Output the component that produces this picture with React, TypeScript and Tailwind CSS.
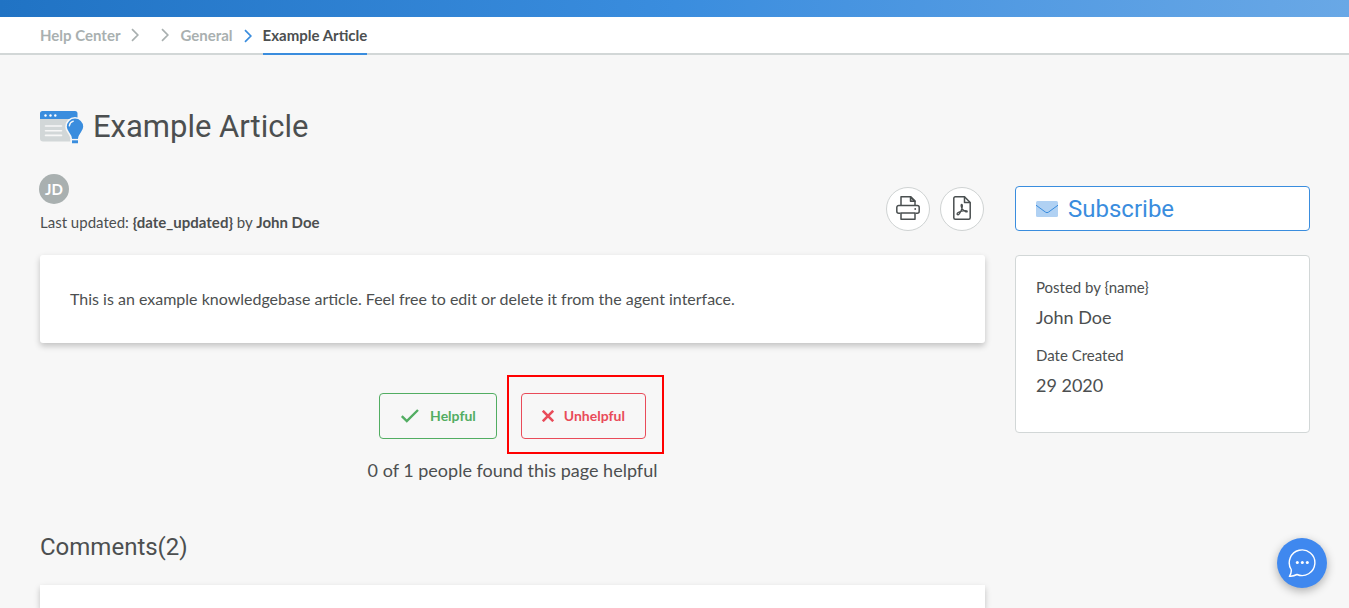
function Chevron({ active = false }: { active?: boolean }) {
  return (
    <svg viewBox="0 0 8 14" className={active ? "h-3.5 w-2 text-[#3a8dde]" : "h-3.5 w-2 text-[#a9b0b0]"} fill="none" stroke="currentColor" strokeWidth="1.7" aria-hidden="true">
      <path d="M1 1.2 6.8 7 1 12.8" />
    </svg>
  );
}

function ArticleIcon() {
  return (
    <svg viewBox="0 0 44 34" className="h-[34px] w-11 shrink-0" aria-hidden="true">
      <path d="M0 9h37v19.500a3 3 0 0 1-3 3H3a3 3 0 0 1-3-3z" fill="#d2d7d8" />
      <path d="M2.500 1h32.500a2.500 2.500 0 0 1 2.500 2.500V9H0V3.500A2.500 2.500 0 0 1 2.500 1z" fill="#3a8dde" />
      <g fill="#fff">
        <circle cx="5.500" cy="5.500" r="1.200" />
        <circle cx="10.500" cy="5.500" r="1.200" />
        <circle cx="15.300" cy="5.500" r="1.200" />
      </g>
      <path d="M5.500 16h16M5.500 20.700h16M5.500 25.400h16" stroke="#f7f7f7" strokeWidth="1.600" strokeLinecap="round" />
      <path d="M35 7.800a9 9 0 0 0-9 9c0 5.500 5.200 6.700 5.200 12V34h7.600v-5.200c0-5.300 5.200-6.500 5.200-12a9 9 0 0 0-9-9z" fill="#3a8dde" stroke="#f7f7f7" strokeWidth="1.600" />
      <path d="M30.500 29.600h9" stroke="#f7f7f7" strokeWidth="1.400" />
      <path d="M29.300 15.800a5.700 5.700 0 0 1 4-4.600" fill="none" stroke="#f7f7f7" strokeWidth="1.300" strokeLinecap="round" />
    </svg>
  );
}

function PrintIcon() {
  return (
    <svg viewBox="0 0 24 24" className="size-6" fill="none" stroke="#4a4f50" strokeWidth="1.500" strokeLinejoin="round" aria-hidden="true">
      <path d="M5 9.500V.8h9.700l4.300 4.300v4.400" />
      <path d="M14.500.8v4.500H19z" fill="#4a4f50" fillOpacity=".35" />
      <path d="M4.500 17.200H2.800a2 2 0 0 1-2-2v-3.700a2 2 0 0 1 2-2h18.400a2 2 0 0 1 2 2v3.700a2 2 0 0 1-2 2h-1.700" />
      <path d="M5 17h14v6.200H5z" />
      <circle cx="19.200" cy="13" r=".9" fill="#4a4f50" stroke="none" />
    </svg>
  );
}

function PdfIcon() {
  return (
    <svg viewBox="0 0 18 24" className="h-6 w-[18px]" fill="none" stroke="#4a4f50" strokeWidth="1.500" strokeLinejoin="round" aria-hidden="true">
      <path d="M2.300.8h9.200l5.700 5.700v15.200a1.500 1.500 0 0 1-1.500 1.500H2.300a1.500 1.500 0 0 1-1.500-1.500V2.300A1.500 1.500 0 0 1 2.300.8z" />
      <path d="M11.500.8v5.700h5.700" />
      <path d="M4.300 18.500c-.9-1 1.200-2.500 3.500-3.200 2.600-.8 6.700-1 6.400.2-.3 1.300-3.600-.7-4.800-2.300C8.200 11.600 7.700 8.500 8.700 8.500c1.100 0 .7 3.400-.5 6-1.100 2.500-2.700 5-3.900 4z" strokeWidth="1.300" />
    </svg>
  );
}

export default function App() {
  return (
    <div className="flex min-h-screen flex-col bg-[#f7f7f7] font-['Lato',sans-serif] text-[15px] leading-5 text-[#4c4f50]">
      <header className="h-[17px] bg-linear-to-r from-[#2073c4] via-[#3a8dde] to-[#69a8e6]" />
      <nav aria-label="Breadcrumb" className="border-b-2 border-[#d2d7d7] bg-white px-10">
        <ol className="-mb-0.5 flex font-bold text-[#a9b0b0]">
          <li className="flex h-[38px] items-center gap-[11px] pb-0.5">
            <a href="#help-center">Help Center</a>
            <Chevron />
          </li>
          <li className="ml-[22px] flex h-[38px] items-center gap-[11px] pb-0.5">
            <Chevron />
            <a href="#general">General</a>
          </li>
          <li className="ml-[11px] flex h-[38px] items-center gap-[11px]">
            <Chevron active />
            <a href="#article" aria-current="page" className="flex h-full items-center border-b-2 border-[#3a8dde] text-[#4c4f50]">
              Example Article
            </a>
          </li>
        </ol>
      </nav>

      <main className="flex grow flex-col pr-[39px] pl-10 pt-[52px]">
        <div className="flex h-10 items-center gap-[9px]">
          <ArticleIcon />
          <h1 className="font-['Roboto',sans-serif] text-[31px] leading-10">Example Article</h1>
        </div>

        <div className="mt-[27px] grid grow grid-cols-[minmax(0,1fr)_295px] gap-x-[30px]">
          <div className="flex flex-col">
            <div className="flex h-[81px] items-start justify-between">
              <div>
                <div className="-ml-px flex size-[30px] items-center justify-center rounded-full bg-[#a9b0b0] font-bold text-white">JD</div>
                <p className="mt-2">
                  Last updated: <b>{"{date_updated}"}</b> by <b>John Doe</b>
                </p>
              </div>
              <div className="mt-[13px] mr-px flex gap-2.5">
                <button aria-label="Print" className="flex size-11 items-center justify-center rounded-full border border-[#cfd3d3] bg-white pb-0.5">
                  <PrintIcon />
                </button>
                <button aria-label="Download PDF" className="flex size-11 items-center justify-center rounded-full border border-[#cfd3d3] bg-white pb-0.5">
                  <PdfIcon />
                </button>
              </div>
            </div>

            <article className="rounded-[3px] bg-white px-[30px] py-[34px] shadow-[0_3px_6px_rgba(0,0,0,0.22)]">
              <p className="text-base leading-5">This is an example knowledgebase article. Feel free to edit or delete it from the agent interface.</p>
            </article>

            <section className="mt-[50px] flex flex-col items-center">
              <div className="flex gap-6 text-sm font-bold">
                <button className="flex h-[46px] items-center gap-2.5 rounded border border-[#52ad62] px-5 text-[#52ad62]">
                  <svg viewBox="0 0 20 16" className="h-4 w-5" fill="none" stroke="currentColor" strokeWidth="2.400" aria-hidden="true">
                    <path d="M1.800 8.200 6.800 13 18 2" />
                  </svg>
                  Helpful
                </button>
                <div className="relative">
                  <button className="flex h-[46px] items-center gap-2.5 rounded border border-[#e94b59] px-5 text-[#e94b59]">
                    <svg viewBox="0 0 12 12" className="size-3" fill="none" stroke="currentColor" strokeWidth="2.600" aria-hidden="true">
                      <path d="m.8.8 10.400 10.400M11.200.8.8 11.200" />
                    </svg>
                    Unhelpful
                  </button>
                  <div className="pointer-events-none absolute -top-[18px] -right-[18px] -bottom-[15px] -left-[14px] border-2 border-[#ff0000]" />
                </div>
              </div>
              <p className="mt-[19px] text-lg leading-6">0 of 1 people found this page helpful</p>
            </section>

            <h2 className="mt-[51px] font-['Roboto',sans-serif] text-2xl leading-7">Comments(2)</h2>
            <section aria-label="Comments" className="mt-6 grow bg-white shadow-[0_3px_6px_rgba(0,0,0,0.22)]" />
          </div>

          <aside className="mt-3 flex flex-col gap-6">
            <button className="flex h-[45px] items-center gap-2.5 rounded border border-[#3a8dde] bg-white px-5 font-['Roboto',sans-serif] text-2xl text-[#3a8dde]">
              <svg viewBox="0 0 22 16" className="h-4 w-[22px]" aria-hidden="true">
                <rect width="22" height="16" rx="1.500" fill="#b0d1f3" />
                <path d="M0 4.200 9.600 11.200q1.400 1 2.800 0L22 4.200" fill="none" stroke="#3a8dde" strokeWidth="1" />
              </svg>
              Subscribe
            </button>
            <dl className="rounded border border-[#d2d7d7] bg-white px-5 pt-[21px] pb-[35px]">
              <dt>Posted by {"{name}"}</dt>
              <dd className="mt-2 text-lg leading-6">John Doe</dd>
              <dt className="mt-4">Date Created</dt>
              <dd className="mt-2 text-lg leading-6">29 2020</dd>
            </dl>
          </aside>
        </div>
      </main>

      <button aria-label="Open chat" className="fixed right-[22px] bottom-5 flex size-[50px] items-center justify-center rounded-full bg-[#3f88ef] shadow-[0_3px_10px_rgba(0,0,0,0.3)]">
        <svg viewBox="0 0 28 28" className="size-7" fill="none" stroke="#fff" strokeWidth="1.400" strokeLinejoin="round" aria-hidden="true">
          <path d="M3.200 20.500A12.800 12.800 0 1 1 9 25.500q-3.500 1.700-7.600 1.900 2.300-3 1.800-6.900z" />
          <g fill="#fff" stroke="none">
            <circle cx="9.300" cy="13.500" r="1.500" />
            <circle cx="14.300" cy="13.500" r="1.500" />
            <circle cx="19.300" cy="13.500" r="1.500" />
          </g>
        </svg>
      </button>
    </div>
  );
}
